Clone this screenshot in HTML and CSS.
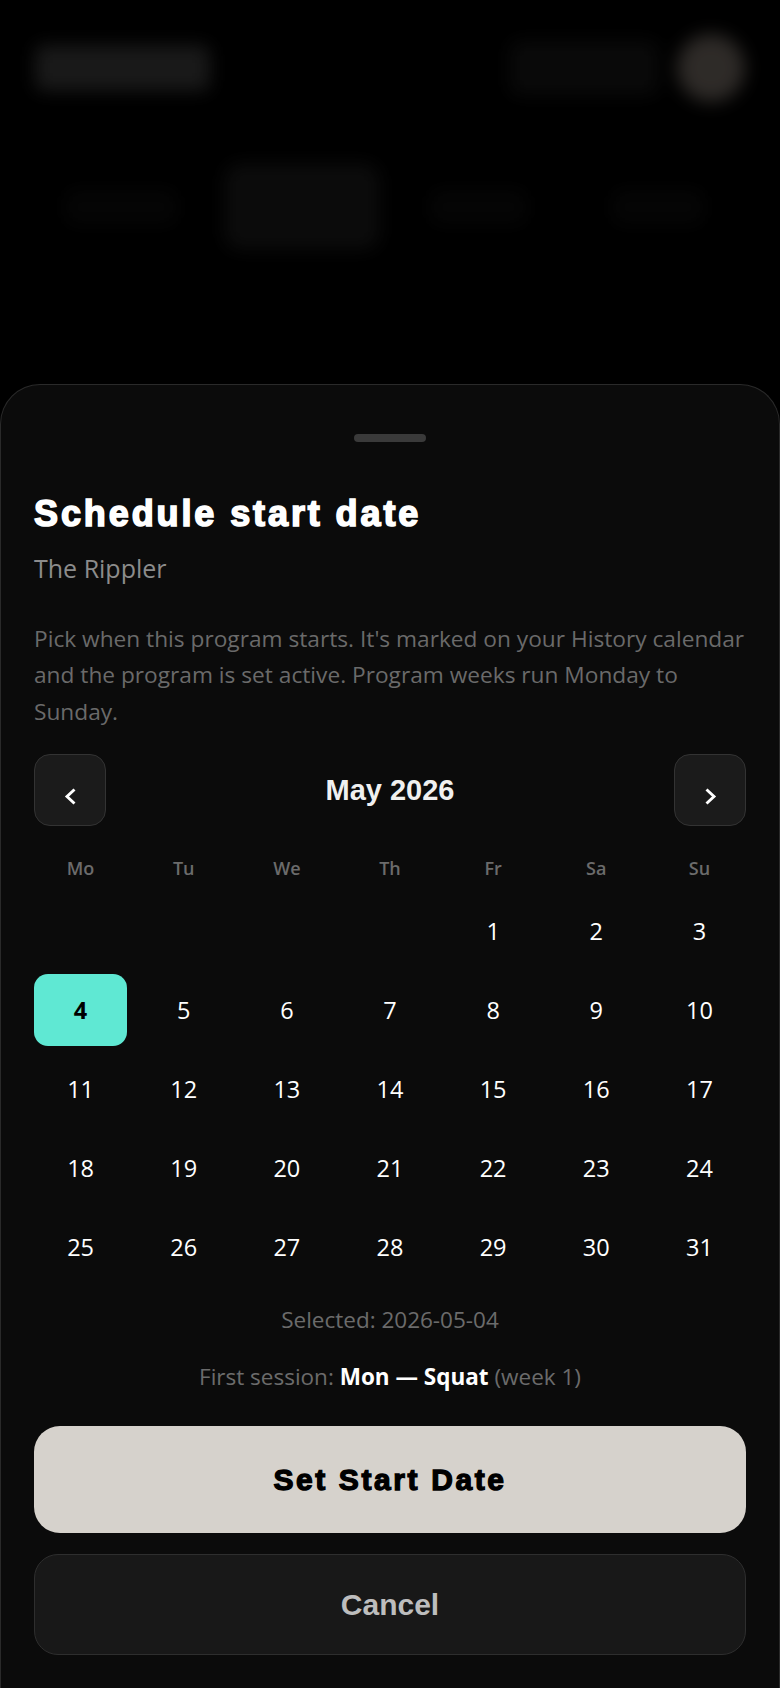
FILE: index.html
```html
<!DOCTYPE html>
<html lang="en">
<head>
<meta charset="utf-8">
<title>Schedule start date</title>
<link rel="stylesheet" href="styles.css">
</head>
<body>
  <div class="app" aria-hidden="true">
    <header class="topbar">
      <div class="logo-blob"></div>
      <div class="top-right">
        <div class="meta-blob"></div>
        <div class="avatar-blob"></div>
      </div>
    </header>
    <nav class="tabs">
      <span class="tab tab-a"></span>
      <span class="tab tab-b"></span>
      <span class="tab tab-c"></span>
      <span class="tab tab-d"></span>
    </nav>
  </div>

  <div class="overlay">
    <section class="sheet">
      <div class="handle"></div>
      <h1 class="title">Schedule start date</h1>
      <p class="subtitle">The Rippler</p>
      <p class="desc">Pick when this program starts. It's marked on your History calendar and the program is set active. Program weeks run Monday to Sunday.</p>

      <div class="month-nav">
        <button class="nav-btn" aria-label="Previous month">
          <svg class="chev" viewBox="0 0 13 17" width="13" height="17"><polyline points="10.5,1.5 3,8.5 10.5,15.5"/></svg>
        </button>
        <h2 class="month">May 2026</h2>
        <button class="nav-btn" aria-label="Next month">
          <svg class="chev" viewBox="0 0 13 17" width="13" height="17"><polyline points="2.5,1.5 10,8.5 2.5,15.5"/></svg>
        </button>
      </div>

      <div class="weekdays">
        <span>Mo</span><span>Tu</span><span>We</span><span>Th</span><span>Fr</span><span>Sa</span><span>Su</span>
      </div>

      <div class="days">
        <span class="day empty"></span><span class="day empty"></span><span class="day empty"></span><span class="day empty"></span>
        <span class="day">1</span><span class="day">2</span><span class="day">3</span>
        <span class="day selected">4</span><span class="day">5</span><span class="day">6</span><span class="day">7</span><span class="day">8</span><span class="day">9</span><span class="day">10</span>
        <span class="day">11</span><span class="day">12</span><span class="day">13</span><span class="day">14</span><span class="day">15</span><span class="day">16</span><span class="day">17</span>
        <span class="day">18</span><span class="day">19</span><span class="day">20</span><span class="day">21</span><span class="day">22</span><span class="day">23</span><span class="day">24</span>
        <span class="day">25</span><span class="day">26</span><span class="day">27</span><span class="day">28</span><span class="day">29</span><span class="day">30</span><span class="day">31</span>
      </div>

      <p class="selected-line">Selected: 2026-05-04</p>
      <p class="first-line">First session: <strong>Mon — Squat</strong> (week 1)</p>

      <button class="primary">Set Start Date</button>
      <button class="secondary">Cancel</button>
    </section>
  </div>
</body>
</html>
```

FILE: styles.css
```css
* { box-sizing: border-box; }

html, body {
  margin: 0;
  padding: 0;
}

body {
  width: 780px;
  height: 1688px;
  overflow: hidden;
  background: #000;
  position: relative;
  font-family: "Open Sans", "Noto Sans", sans-serif;
  color: #fff;
}

/* blurred page behind the sheet */
.app {
  padding: 20px 35px 0 35px;
  filter: blur(9px);
}

.topbar {
  display: flex;
  justify-content: space-between;
  align-items: center;
  height: 96px;
}

.logo-blob {
  width: 175px;
  height: 46px;
  background: #252525;
  border-radius: 8px;
}

.top-right {
  display: flex;
  align-items: center;
  gap: 18px;
}

.meta-blob {
  width: 150px;
  height: 56px;
  background: #0e0e0e;
  border-radius: 10px;
}

.avatar-blob {
  width: 68px;
  height: 68px;
  border-radius: 50%;
  background: #433e3a;
}

.tabs {
  display: flex;
  align-items: center;
  margin-top: 47px;
  height: 87px;
  padding-left: 30px;
}

.tab {
  height: 36px;
  background: #080808;
  border-radius: 8px;
}

.tab-a { width: 112px; }
.tab-b { width: 156px; height: 87px; margin-left: 47px; background: #111; border-radius: 16px; }
.tab-c { width: 97px; margin-left: 50px; }
.tab-d { width: 92px; margin-left: 85px; }

/* overlay + bottom sheet */
.overlay {
  position: absolute;
  inset: 0;
  display: flex;
  flex-direction: column;
  justify-content: flex-end;
  background: rgba(0, 0, 0, 0.3);
}

.sheet {
  background: #0b0b0b;
  border: 1px solid #2a2a2a;
  border-bottom: none;
  border-radius: 40px 40px 0 0;
  padding: 49px 33px 33px;
}

.handle {
  width: 72px;
  height: 8px;
  border-radius: 4px;
  background: #3a3a3a;
  margin: 0 auto;
}

.title {
  margin: 49.5px 0 0;
  font-family: "Liberation Sans", Arial, sans-serif;
  font-weight: 700;
  font-size: 36px;
  line-height: 44px;
  letter-spacing: 2.9px;
  color: #fff;
  -webkit-text-stroke: 1.6px #fff;
}

.subtitle {
  margin: 16.5px 0 0;
  font-size: 25px;
  line-height: 32px;
  color: #8c8c8c;
}

.desc {
  margin: 36.6px 0 0;
  font-size: 22.7px;
  line-height: 36.6px;
  color: #6a6a6a;
}

.month-nav {
  margin-top: 23.4px;
  display: flex;
  align-items: center;
  height: 72px;
}

.nav-btn {
  width: 72px;
  height: 72px;
  padding: 0;
  background: #1b1b1b;
  border: 1.5px solid #333;
  border-radius: 16px;
  display: flex;
  align-items: center;
  justify-content: center;
  cursor: pointer;
}

.chev {
  margin-top: 12px;
  fill: none;
  stroke: #fff;
  stroke-width: 2.9;
  stroke-linecap: butt;
  stroke-linejoin: miter;
}

.month {
  flex: 1;
  margin: 0;
  text-align: center;
  font-family: "Liberation Sans", Arial, sans-serif;
  font-weight: 700;
  font-size: 29px;
  line-height: 72px;
  color: #f0f0f0;
}

.weekdays {
  margin-top: 30px;
  display: grid;
  grid-template-columns: repeat(7, 1fr);
  column-gap: 10px;
  font-size: 18px;
  font-weight: 600;
  line-height: 24px;
  color: #6b6b6b;
  text-align: center;
}

.days {
  margin-top: 15px;
  display: grid;
  grid-template-columns: repeat(7, 1fr);
  grid-auto-rows: 72px;
  column-gap: 10px;
  row-gap: 7px;
}

.day {
  display: flex;
  align-items: center;
  justify-content: center;
  font-size: 23.5px;
  color: #fff;
  border-radius: 14px;
}

.day.selected {
  background: #5fe8d3;
  color: #000;
  font-weight: 700;
}

.selected-line {
  margin: 23px 0 0;
  text-align: center;
  font-size: 22.5px;
  line-height: 28px;
  color: #6b6b6b;
}

.first-line {
  margin: 29px 0 0;
  text-align: center;
  font-size: 22.5px;
  line-height: 28px;
  color: #6b6b6b;
}

.first-line strong {
  color: #fff;
  font-weight: 700;
}

.primary {
  display: block;
  width: 100%;
  height: 107px;
  margin-top: 35px;
  border: none;
  border-radius: 26px;
  background: #d6d2cc;
  color: #000;
  font-family: "Liberation Sans", Arial, sans-serif;
  font-weight: 700;
  font-size: 30px;
  letter-spacing: 2.6px;
  -webkit-text-stroke: 1.3px #000;
  cursor: pointer;
}

.secondary {
  display: block;
  width: 100%;
  height: 101px;
  margin-top: 21px;
  border: 1.5px solid #2e2e2e;
  border-radius: 24px;
  background: #181818;
  color: #bdbdbd;
  font-family: "Liberation Sans", Arial, sans-serif;
  font-weight: 700;
  font-size: 30px;
  cursor: pointer;
}
```
